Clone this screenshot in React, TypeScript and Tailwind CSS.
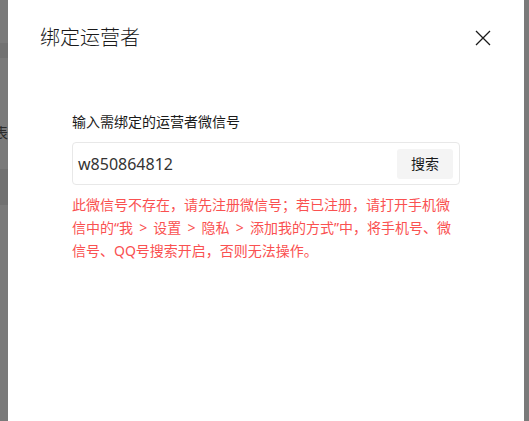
import React from "react";

const font = { fontFamily: '"Noto Sans", "Noto Sans CJK SC", sans-serif' };

export default function App() {
    return (
        <div className="relative flex h-[421px] w-full overflow-hidden bg-[#7a7a7a] pl-2 pr-[5px]" style={font}>
            {/* background page hints behind the overlay */}
            <div className="absolute left-0 top-[43px] h-[15px] w-2 bg-[#727272]" />
            <div className="absolute left-0 top-[169px] h-[36px] w-2 bg-[#717171]" />
            <div className="absolute left-[-6px] top-[126px] text-[14px] leading-none text-[#2a2a2a]">表</div>

            <div className="relative z-10 flex flex-1 flex-col bg-white">
                {/* Header */}
                <div className="flex items-center justify-between pl-8 pr-[32px] pt-[24px]">
                    <h2 className="text-[20px] font-light leading-7 text-[#1a1a1a]">绑定运营者</h2>
                    <button className="flex h-[18px] w-[18px] items-center justify-center text-[#1a1a1a]">
                        <svg width="16" height="16" viewBox="0 0 16 16" fill="none" stroke="currentColor" strokeWidth="1.3">
                            <path d="M1 1L15 15M15 1L1 15" />
                        </svg>
                    </button>
                </div>

                {/* Body */}
                <div className="flex flex-col pl-16 pt-[60px]">
                    <label className="text-[14px] leading-5 text-[#1a1a1a]">输入需绑定的运营者微信号</label>
                    <div className="mt-[10px] flex h-[43px] w-[388px] items-center justify-between rounded-[4px] border border-[#e8e8e8] pl-[5px] pr-[6px]">
                        <span className="text-[16px] text-[#333]">w850864812</span>
                        <button className="h-[30px] w-[56px] rounded-[3px] bg-[#f4f4f4] text-[14px] text-[#1a1a1a]">搜索</button>
                    </div>
                    <p className="mt-[8px] w-[388px] text-[14px] leading-[23px] text-[#fa5151] [word-spacing:2.5px]">
                        此微信号不存在，请先注册微信号；若已注册，请打开手机微信中的“我 &gt; 设置 &gt; 隐私 &gt; 添加我的方式”中，将手机号、微信号、QQ号搜索开启，否则无法操作。
                    </p>
                </div>
            </div>
        </div>
    );
}
